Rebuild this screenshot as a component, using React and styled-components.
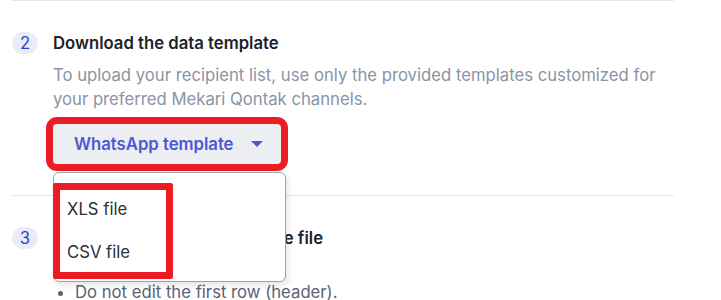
import React from 'react';
import styled, { createGlobalStyle } from 'styled-components';

const GlobalStyle = createGlobalStyle`
  body {
    margin: 0;
    background: #fff;
    font-family: Inter, "Noto Sans", sans-serif;
    font-size: 16.7px;
    -webkit-font-smoothing: antialiased;
  }
`

const Page = styled.div`
  width: 662px;
  margin: 0 12px;
`

const Section = styled.section`
  display: grid;
  grid-template-columns: 41px 1fr;
  padding: 30px 0 31px;
  border-top: 1px solid #e6e8ec;
`

const Badge = styled.div`
  width: 26px;
  height: 22px;
  margin-top: 1px;
  border-radius: 11px;
  background: #eaecfa;
  color: #2b43c6;
  font-size: 16.7px;
  line-height: 22px;
  text-align: center;
`

const Body = styled.div`
  display: flex;
  flex-direction: column;
  align-items: flex-start;
`

const Title = styled.h3`
  margin: 0;
  font-size: 16.7px;
  line-height: 24px;
  font-weight: 600;
  color: #1d222c;
`

const Desc = styled.p`
  margin: ${p => p.$gap || 8}px 0 0;
  font-size: 16.7px;
  line-height: 24px;
  color: #8b93a5;
`

const DropWrap = styled.div`
  position: relative;
  margin-top: 13px;
`

const Button = styled.button`
  display: flex;
  align-items: center;
  gap: 17px;
  height: 40px;
  padding: 0 18px 0 21px;
  border: none;
  border-radius: 4px;
  background: #eceef2;
  color: #4a58d6;
  font-family: inherit;
  font-size: 16.7px;
  font-weight: 600;
  outline: 7px solid #ec1c24;
`

const Caret = styled.span`
  width: 0;
  height: 0;
  border-left: 6px solid transparent;
  border-right: 6px solid transparent;
  border-top: 6px solid #4a58d6;
`

const Menu = styled.div`
  position: absolute;
  top: 48px;
  left: 0;
  width: 233px;
  box-sizing: border-box;
  padding: 10px 0 2px;
  background: #fff;
  border: 1px solid #9ba2b1;
  border-radius: 6px;
  box-shadow: 2px 3px 6px rgba(20, 30, 50, 0.12);
  z-index: 2;
`

const Highlight = styled.div`
  display: flex;
  flex-direction: column;
  gap: 19px;
  width: 106px;
  margin-left: -1px;
  padding: 7px 0 8px;
  border: 7px solid #ec1c24;
  border-radius: 2px;
`

const Item = styled.div`
  padding-left: 7px;
  line-height: 24px;
  font-size: 16.7px;
  color: #2b303a;
`

const List = styled.ul`
  margin: 0;
  padding-left: 22px;
  font-size: 16.7px;
  line-height: 24px;
  color: #5a6275;
`

export default function App() {
  return (
    <Page>
      <GlobalStyle />
      <Section>
        <Badge>2</Badge>
        <Body>
          <Title>Download the data template</Title>
          <Desc>
            To upload your recipient list, use only the provided templates customized for
            your preferred Mekari Qontak channels.
          </Desc>
          <DropWrap>
            <Button>
              WhatsApp template
              <Caret />
            </Button>
            <Menu>
              <Highlight>
                <Item>XLS file</Item>
                <Item>CSV file</Item>
              </Highlight>
            </Menu>
          </DropWrap>
        </Body>
      </Section>
      <Section>
        <Badge>3</Badge>
        <Body>
          <Title>Fill in and upload the template file</Title>
          <Desc $gap={6}>Please note the following:</Desc>
          <List>
            <li>Do not edit the first row (header).</li>
          </List>
        </Body>
      </Section>
    </Page>
  )
}
